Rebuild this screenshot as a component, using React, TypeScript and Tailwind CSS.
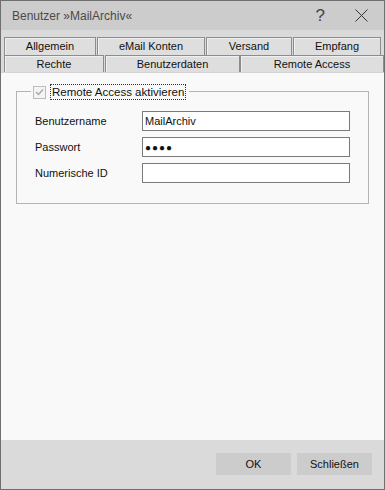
import React from 'react';

const font = { fontFamily: '"Liberation Sans", Arial, sans-serif' };

function Tab({ label, w, active }: { label: string; w: string; active?: boolean }) {
  if (active) {
    return (
      <div
        className={`${w} relative z-10 -mt-[2px] h-[20px] border-l border-r border-t border-[#adadad] bg-[#f9f9f9] flex items-center justify-center text-[11px] text-[#111]`}
      >
        {label}
      </div>
    );
  }
  return (
    <div
      className={`${w} h-full border-l border-r border-t border-[#8c8c8c] bg-[#dedede] flex items-center justify-center text-[11px] text-[#111] shadow-[inset_1px_1px_0_#f0f0f0]`}
    >
      {label}
    </div>
  );
}

function Field({ label, value, password }: { label: string; value: string; password?: boolean }) {
  return (
    <div className="flex items-center h-[20px]">
      <span className="w-[107px] text-[11px] text-[#111]">{label}</span>
      <div className="w-[208px] h-[20px] border border-[#7a7a7a] bg-white flex items-center px-[2px] text-[11px] text-[#111]">
        {password ? <span className="tracking-[1px] text-[10px]">●●●●</span> : value}
      </div>
    </div>
  );
}

export default function App() {
  return (
    <div style={font} className="w-[385px] h-[490px] border border-[#6f6f6f] bg-[#dadada] flex flex-col overflow-hidden">
      {/* title bar */}
      <div className="h-[29px] bg-[#cccccc] flex items-center pl-[11px] pr-[16px] shrink-0">
        <span className="text-[12px] text-[#4a4a4a] flex-1">Benutzer »MailArchiv«</span>
        <span className="text-[17px] font-light text-[#444] mr-[30px] leading-none">?</span>
        <svg width="13" height="13" viewBox="0 0 13 13" className="mb-[1px]">
          <path d="M0.5 0.5 L12.5 12.5 M12.5 0.5 L0.5 12.5" stroke="#333" strokeWidth="1" />
        </svg>
      </div>

      {/* tabs */}
      <div className="flex flex-col pl-[3px] pt-[7px] shrink-0">
        <div className="flex gap-[1px] h-[18px]">
          <Tab label="Allgemein" w="w-[92px]" />
          <Tab label="eMail Konten" w="w-[108px]" />
          <Tab label="Versand" w="w-[86px]" />
          <Tab label="Empfang" w="w-[88px]" />
        </div>
        <div className="flex h-[17px]">
          <Tab label="Rechte" w="w-[100px]" />
          <div className="w-[1px]" />
          <Tab label="Benutzerdaten" w="w-[135px]" />
          <Tab label="Remote Access" w="w-[144px]" />
        </div>
      </div>

      {/* panel */}
      <div className="flex-1 bg-[#f9f9f9] border-t border-[#d4d4d4] pt-[18px] px-[15px]">
        <div className="relative border border-[#b4b4b4] h-[113px] pt-[19px] pl-[18px]">
          <div className="absolute -top-[8px] left-[14px] flex items-center bg-[#f9f9f9] pl-[2px] pr-[3px]">
            <div className="w-[13px] h-[13px] border border-[#bcbcbc] bg-[#f4f4f4] flex items-center justify-center">
              <svg width="9" height="8" viewBox="0 0 9 8">
                <path d="M1 4 L3.5 6.5 L8 1.5" stroke="#a8a8a8" strokeWidth="1.3" fill="none" />
              </svg>
            </div>
            <span className="ml-[4px] text-[11.5px] text-[#111] border border-dotted border-[#333] px-[1px] leading-[14px]">
              Remote Access aktivieren
            </span>
          </div>
          <div className="flex flex-col gap-[6px]">
            <Field label="Benutzername" value="MailArchiv" />
            <Field label="Passwort" value="" password />
            <Field label="Numerische ID" value="" />
          </div>
        </div>
      </div>

      {/* footer */}
      <div className="h-[49px] shrink-0 flex items-start justify-end gap-[6px] pt-[13px] pr-[12px]">
        <button className="w-[75px] h-[22px] bg-[#cccccc] text-[11px] text-[#111]">OK</button>
        <button className="w-[75px] h-[22px] bg-[#cccccc] text-[11px] text-[#111]">Schließen</button>
      </div>
    </div>
  );
}
